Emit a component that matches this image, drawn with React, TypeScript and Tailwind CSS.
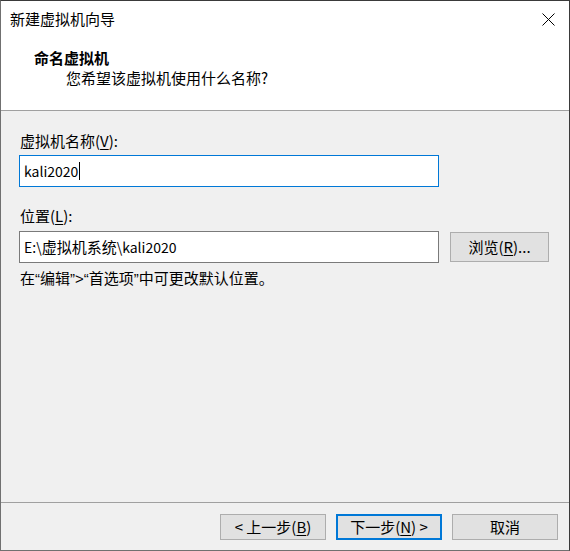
import React from "react";

const font = { fontFamily: '"Noto Sans CJK SC", "Noto Sans", sans-serif' };

function U({ children }: { children: React.ReactNode }) {
  return <span className="underline underline-offset-2 decoration-1">{children}</span>;
}

function L({ children }: { children: React.ReactNode }) {
  return <span className="text-[14px]">{children}</span>;
}

function Q({ children }: { children: React.ReactNode }) {
  return <span style={{ fontFamily: '"Liberation Sans", sans-serif' }}>{children}</span>;
}

function Btn({ children, primary }: { children: React.ReactNode; primary?: boolean }) {
  return (
    <div
      className={
        "w-[106px] h-[26px] flex items-center justify-center bg-[#e1e1e1] text-[15px] leading-[20px] text-black " +
        (primary ? "border-2 border-[#0078d7]" : "border border-[#adadad]")
      }
    >
      {children}
    </div>
  );
}

export default function App() {
  return (
    <div
      className="w-[570px] h-[551px] flex flex-col bg-[#f0f0f0] border-t border-r border-t-[#3a3a3a] border-r-[#3a3a3a] border-l border-b border-l-[#707070] border-b-[#707070] text-black"
      style={font}
    >
      <div className="bg-white border-b border-[#a0a0a0] h-[110px] flex flex-col shrink-0">
        <div className="h-[36px] flex items-center justify-between pl-[9px] pr-[14px]">
          <span className="text-[15px] leading-[20px] text-black">新建虚拟机向导</span>
          <svg width="13" height="13" viewBox="0 0 13 13">
            <path d="M0.5 0.5 L12.5 12.5 M12.5 0.5 L0.5 12.5" stroke="#000" strokeWidth="1" fill="none" />
          </svg>
        </div>
        <div className="pt-[11px] pl-[33px] text-[15px] leading-[20px] font-bold">命名虚拟机</div>
        <div className="pl-[65px] text-[15px] leading-[20px]">您希望该虚拟机使用什么名称?</div>
      </div>

      <div className="flex-1 flex flex-col pl-[18px] pt-[20px] text-[15px] leading-[20px]">
        <div className="pl-[1px]">
          虚拟机名称(<U>V</U>):
        </div>
        <div className="mt-[4px] w-[420px] h-[32px] bg-white border border-[#0078d7] flex items-center pl-[4px]">
          <L>kali2020</L>
          <span className="inline-block w-[1px] h-[18px] bg-black ml-[1px]" />
        </div>
        <div className="mt-[19px] pl-[1px]">
          位置(<U>L</U>):
        </div>
        <div className="mt-[5px] flex items-center gap-[11px]">
          <div className="w-[420px] h-[32px] bg-white border border-[#7a7a7a] flex items-center pl-[4px]">
            <L>E:\</L>虚拟机系统<L>\kali2020</L>
          </div>
          <div className="w-[99px] h-[30px] bg-[#e1e1e1] border border-[#adadad] flex items-center justify-center">
            浏览(<U>R</U>)...
          </div>
        </div>
        <div className="mt-[5px] pl-[1px]">
          在<Q>“</Q>编辑<Q>”&gt;“</Q>首选项<Q>”</Q>中可更改默认位置。
        </div>
      </div>

      <div className="h-[48px] shrink-0 border-t border-[#a0a0a0] flex justify-end items-start pt-[11px] pr-[11px] gap-[10px]">
        <Btn>&lt; 上一步(<U>B</U>)</Btn>
        <Btn primary>下一步(<U>N</U>) &gt;</Btn>
        <Btn>取消</Btn>
      </div>
    </div>
  );
}
